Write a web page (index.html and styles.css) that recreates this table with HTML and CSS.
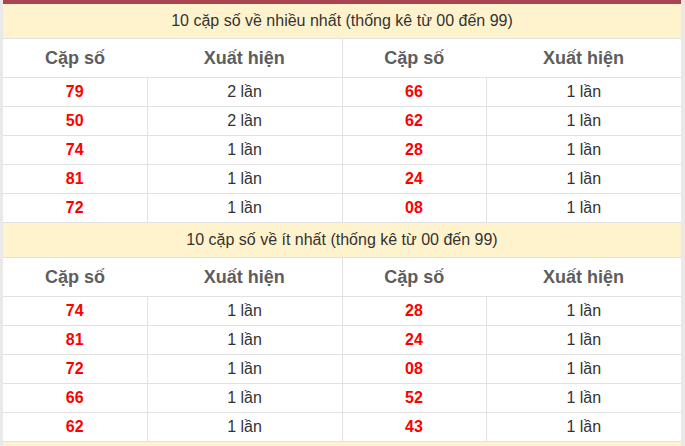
FILE: index.html
```html
<!DOCTYPE html>
<html lang="vi">
<head>
<meta charset="utf-8">
<link rel="stylesheet" href="styles.css">
</head>
<body>
<div class="frame">
  <div class="box">
    <table class="stats">
      <colgroup><col class="c1"><col class="c2"><col class="c1"><col class="c2"></colgroup>
      <tr class="cap"><td colspan="4">10 cặp số về nhiều nhất (thống kê từ 00 đến 99)</td></tr>
      <tr class="head"><th>Cặp số</th><th>Xuất hiện</th><th class="split">Cặp số</th><th>Xuất hiện</th></tr>
      <tr><td class="num">79</td><td>2 lần</td><td class="num">66</td><td>1 lần</td></tr>
      <tr><td class="num">50</td><td>2 lần</td><td class="num">62</td><td>1 lần</td></tr>
      <tr><td class="num">74</td><td>1 lần</td><td class="num">28</td><td>1 lần</td></tr>
      <tr><td class="num">81</td><td>1 lần</td><td class="num">24</td><td>1 lần</td></tr>
      <tr><td class="num">72</td><td>1 lần</td><td class="num">08</td><td>1 lần</td></tr>
      <tr class="cap"><td colspan="4">10 cặp số về ít nhất (thống kê từ 00 đến 99)</td></tr>
      <tr class="head"><th>Cặp số</th><th>Xuất hiện</th><th class="split">Cặp số</th><th>Xuất hiện</th></tr>
      <tr><td class="num">74</td><td>1 lần</td><td class="num">28</td><td>1 lần</td></tr>
      <tr><td class="num">81</td><td>1 lần</td><td class="num">24</td><td>1 lần</td></tr>
      <tr><td class="num">72</td><td>1 lần</td><td class="num">08</td><td>1 lần</td></tr>
      <tr><td class="num">66</td><td>1 lần</td><td class="num">52</td><td>1 lần</td></tr>
      <tr><td class="num">62</td><td>1 lần</td><td class="num">43</td><td>1 lần</td></tr>
      <tr class="cap"><td colspan="4"></td></tr>
    </table>
  </div>
</div>
</body>
</html>
```
FILE: styles.css
```css
html, body {
  margin: 0;
  padding: 0;
  background: #fff;
}
.frame {
  width: 685px;
  height: 446px;
  overflow: hidden;
  background: #e9e9e9;
  padding: 0 4px 0 3px;
  box-sizing: border-box;
}
.box {
  background: #fff;
  border-top: 4px solid #a8434f;
}
.stats {
  width: 100%;
  border-collapse: collapse;
  table-layout: fixed;
  font-family: "Liberation Sans", Arial, sans-serif;
  font-size: 16px;
  color: #333;
}
.c1 { width: 144px; }
.c2 { width: 195px; }
.stats td, .stats th {
  text-align: center;
  padding: 0;
  border: 1px solid #e2e2e2;
  border-top: 0;
}
.stats tr > :first-child { border-left: 0; }
.stats tr > :last-child { border-right: 0; }
.stats td { height: 28px; }
.cap td {
  background: #fff3cd;
  height: 34px;
  color: #333;
}
.head th {
  height: 38px;
  font-size: 18px;
  font-weight: bold;
  color: #5d5d5d;
  border-left: 0;
  border-right: 0;
}
.head th.split { border-left: 1px solid #e2e2e2; }
.num {
  color: #f00;
  font-weight: bold;
}
```
